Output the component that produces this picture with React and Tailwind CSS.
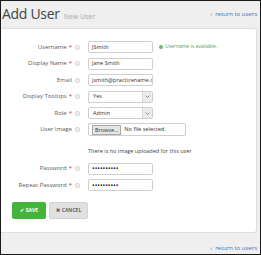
import React from 'react';

const font = { fontFamily: '"Open Sans", "Liberation Sans", sans-serif' };

function Info() {
  return (
    <span className="ml-[3px] inline-flex h-[5px] w-[5px] items-center justify-center rounded-full border border-[#c8c8c8]">
      <span className="h-[1px] w-[1px] rounded-full bg-[#c8c8c8]" />
    </span>
  );
}

function Row({ label, required, children }) {
  return (
    <div className="flex h-[12px] items-center">
      <div className="flex w-[79px] items-center justify-end text-[6px] text-[#5a5a5a]">
        <span>{label}</span>
        {required && <span className="ml-[2px] text-[#e02020]">*</span>}
        <Info />
      </div>
      <div className="ml-[8px] flex h-full items-center">{children}</div>
    </div>
  );
}

function TextBox({ value, password }) {
  return (
    <div className="flex h-[12px] w-[65px] items-center overflow-hidden whitespace-nowrap rounded-[2px] border border-[#cfcfcf] bg-white px-[3px] text-[5.6px] text-[#333]">
      {password ? <span className="text-[7px] leading-none text-[#222]">••••••••••</span> : value}
    </div>
  );
}

function Select({ value }) {
  return (
    <div className="flex h-[12px] w-[65px] items-center rounded-[2px] border border-[#cfcfcf] bg-white text-[5.6px] text-[#333]">
      <span className="flex-1 px-[4px]">{value}</span>
      <span className="flex h-full w-[10px] items-center justify-center border-l border-[#d5d5d5] bg-[#ececec]">
        <svg width="5" height="3" viewBox="0 0 5 3"><path d="M0.5 0.5 L2.5 2.5 L4.5 0.5" fill="none" stroke="#777" strokeWidth="0.8" /></svg>
      </span>
    </div>
  );
}

function ReturnLink() {
  return (
    <span className="text-[6px] text-[#3b6fc4]">‹&nbsp; return to users</span>
  );
}

export default function App() {
  return (
    <div className="h-[255px] w-[261px] overflow-hidden border border-[#1a1a1a] bg-[#efefef]" style={font}>
      <div className="flex h-[27px] items-center justify-between pl-[1px] pr-[3px]">
        <div className="flex items-baseline">
          <span className="text-[14px] leading-none tracking-[-0.3px] text-[#444]">Add User</span>
          <span className="ml-[4px] text-[7px] text-[#aaa]">New User</span>
        </div>
        <ReturnLink />
      </div>
      <div className="mr-[3px] h-[205px] rounded-r-[3px] border border-l-0 border-[#dedede] bg-white pt-[12px]">
        <div className="flex flex-col gap-[4.5px]">
          <div className="flex items-center">
            <Row label="Username" required>
              <TextBox value="JSmith" />
            </Row>
            <div className="ml-[6px] flex items-center text-[5px] text-[#5aa05a]">
              <span className="mr-[2px] inline-block h-[4px] w-[4px] rounded-full bg-[#6ab36a]" />
              Username is available.
            </div>
          </div>
          <Row label="Display Name" required><TextBox value="Jane Smith" /></Row>
          <Row label="Email"><TextBox value="jsmith@practicename.com" /></Row>
          <Row label="Display Tooltips" required><Select value="Yes" /></Row>
          <Row label="Role" required><Select value="Admin" /></Row>
          <Row label="User Image">
            <div className="flex h-[13px] w-[98px] items-center rounded-[2px] border border-[#cfcfcf] bg-white px-[3px] text-[5.6px] text-[#333]">
              <span className="mr-[3px] border border-[#aaa] bg-[#e6e6e6] px-[2px] text-[5.5px] leading-[8px]">Browse…</span>
              No file selected.
            </div>
          </Row>
        </div>
        <div className="ml-[87px] mt-[11px] text-[5.5px] text-[#444]">There is no image uploaded for this user</div>
        <div className="mt-[8px] flex flex-col gap-[4.5px]">
          <Row label="Password" required><TextBox password /></Row>
          <Row label="Repeat Password" required><TextBox password /></Row>
        </div>
        <div className="ml-[11px] mt-[11px] flex gap-[3px]">
          <button className="flex h-[17px] w-[34px] items-center justify-center gap-[2px] rounded-[2px] bg-[#43b53b] text-[5px] font-bold text-white">
            <span>✔</span>SAVE
          </button>
          <button className="flex h-[17px] w-[39px] items-center justify-center gap-[2px] rounded-[2px] border border-[#d4d4d4] bg-[#e1e1e1] text-[5px] font-bold text-[#666]">
            <span>✖</span>CANCEL
          </button>
        </div>
      </div>
      <div className="flex h-[21px] items-end justify-end pb-[1px] pr-[3px]">
        <ReturnLink />
      </div>
    </div>
  );
}
